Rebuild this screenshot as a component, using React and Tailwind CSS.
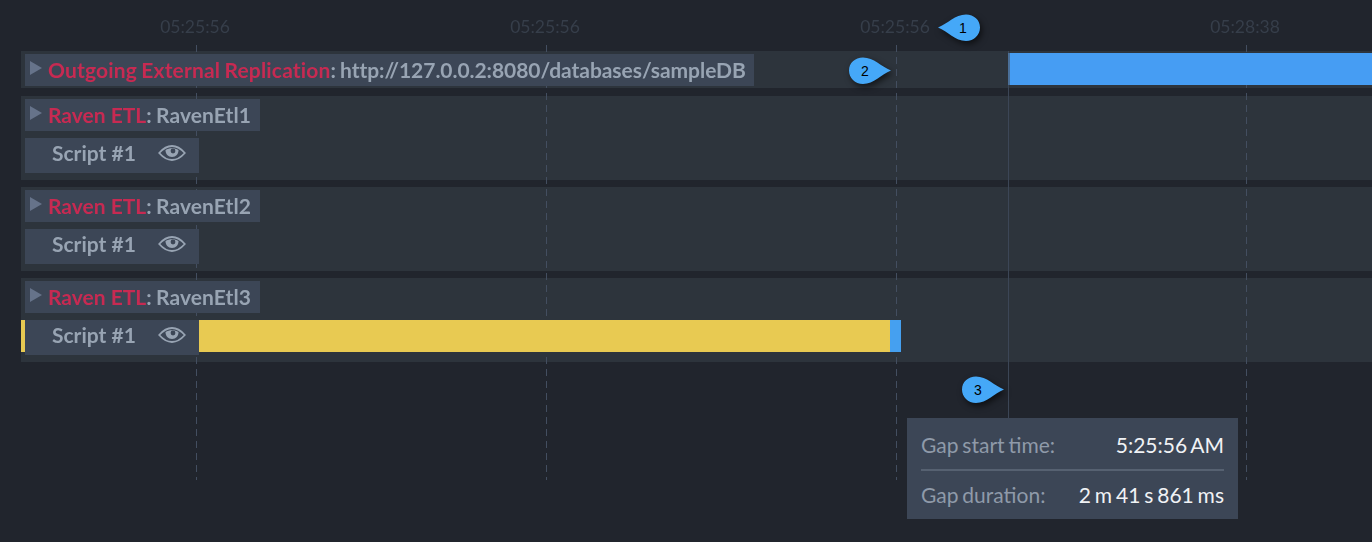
const lato = { fontFamily: "Lato, 'Liberation Sans', sans-serif" };

function Pin({ n, dir, className }) {
  const d =
    dir === "left"
      ? "M0 13.5 C10 9.5 17 0.5 28 0.5 C36 0.5 42 6 42 13.5 C42 21 36 27 28 27 C17 27 10 17.5 0 13.5 Z"
      : "M42 13.5 C32 9.5 25 0.5 14 0.5 C6 0.5 0 6 0 13.5 C0 21 6 27 14 27 C25 27 32 17.5 42 13.5 Z";
  return (
    <div className={`absolute z-20 w-[42px] h-7 ${className}`}>
      <svg width="42" height="28" viewBox="0 0 42 28" className="absolute inset-0 overflow-visible drop-shadow-[2px_3px_3px_rgba(0,0,0,0.6)]">
        <path d={d} fill="#45a8f8" />
      </svg>
      <span
        className={`absolute top-0 h-7 leading-7 text-[14px] text-black text-center w-6 ${dir === "left" ? "left-[13px]" : "left-[4px]"}`}
        style={{ fontFamily: "'Liberation Sans', sans-serif" }}
      >
        {n}
      </span>
    </div>
  );
}

function Eye() {
  return (
    <svg width="28" height="16" viewBox="0 0 28 16" fill="none" stroke="#98a4b3" className="shrink-0">
      <path d="M1.2 8 C6 2.5 10 1 14 1 C18 1 22 2.5 26.8 8 C22 13.5 18 15 14 15 C10 15 6 13.5 1.2 8 Z" strokeWidth="1.8" />
      <path d="M7.5 5 C11 2.5 17 2.5 20.5 5 C20.5 9 18 12 14 12 C10 12 7.5 9 7.5 5 Z" fill="#98a4b3" stroke="none" />
      <circle cx="15" cy="6" r="2.4" fill="#3c4656" stroke="none" />
    </svg>
  );
}

function Title({ kind, name, wide }) {
  return (
    <div className={`relative z-10 h-[32px] bg-[#3c4656] flex items-center w-fit text-[21px] font-bold pl-[5px] whitespace-nowrap blur-[0.5px] ${wide ? "pr-[8px] [word-spacing:-1px]" : "pr-[9px]"}`}>
      <span className="w-0 h-0 border-y-[7px] border-y-transparent border-l-[12px] border-l-[#66738a] mr-[6px] -mt-1 shrink-0" />
      <span className={`text-[#c72a52] ${wide ? "tracking-[0.17px]" : ""}`}>{kind}</span>
      <span className={`text-[#98a4b3] ${wide ? "tracking-[-0.05px]" : "tracking-[0.1px] [word-spacing:-1px]"}`}>: {name}</span>
    </div>
  );
}

function Script({ bar }) {
  return (
    <div className="flex items-start mt-[7px] relative z-10">
      {bar && <div className="absolute left-[-4px] top-0 w-1 h-[32px] bg-[#e8ca52]" />}
      <div className="h-[35px] w-[174px] bg-[#3c4656] flex items-center pl-[27px] pb-[5px] gap-[22px] text-[21px] font-bold text-[#98a4b3] shrink-0 blur-[0.5px]">
        <span>Script #1</span>
        <Eye />
      </div>
      {bar && (
        <>
          <div className="w-[691px] h-[32px] bg-[#e8ca52]" />
          <div className="w-[11px] h-[32px] bg-[#45a0f0]" />
        </>
      )}
    </div>
  );
}

function EtlRow({ name, bar }) {
  return (
    <div className="bg-[#2d343c] h-[84px] pt-[3px] pl-1">
      <Title kind="Raven ETL" name={name} />
      <Script bar={bar} />
    </div>
  );
}

const ticks = [
  { x: 196, t: "05:25:56" },
  { x: 546, t: "05:25:56" },
  { x: 896, t: "05:25:56" },
  { x: 1246, t: "05:28:38" },
];

export default function App() {
  return (
    <div className="relative w-[1372px] h-[542px] overflow-hidden bg-[#21252d]" style={lato}>
      {/* Axis labels */}
      {ticks.map((k) => (
        <span
          key={k.x}
          className="absolute top-[17px] w-[90px] text-center text-[17.5px] leading-5 text-[#363e4a] blur-[0.5px]"
          style={{ left: k.x - 46 }}
        >
          {k.t}
        </span>
      ))}

      {/* Tracks */}
      <div className="absolute left-[21px] right-0 top-[51px] flex flex-col">
        <div className="bg-[#2d343c] h-[37px] pt-[3px] pl-1 mb-2">
          <Title wide kind="Outgoing External Replication" name="http://127.0.0.2:8080/databases/sampleDB" />
        </div>
        <div className="flex flex-col gap-[7px]">
          <EtlRow name="RavenEtl1" />
          <EtlRow name="RavenEtl2" />
          <EtlRow name="RavenEtl3" bar />
        </div>
      </div>

      {/* Blue gap bar in the first track */}
      <div className="absolute z-10 left-[1008px] right-0 top-[53px] h-[32px] bg-[#469df3] border-l-2 border-[#4a6f98]" />

      {/* Dashed grid lines */}
      {ticks.map((k) => (
        <div
          key={k.x}
          className="absolute z-[5] top-[45px] h-[435px] w-px bg-[repeating-linear-gradient(to_bottom,#434e60_0,#434e60_7px,transparent_7px,transparent_12px)] pointer-events-none"
          style={{ left: k.x }}
        />
      ))}
      {/* Solid gap line */}
      <div className="absolute z-[5] left-[1008px] top-[51px] h-[367px] w-px bg-[#3c4656]" />

      {/* Pins */}
      <Pin n="1" dir="left" className="left-[938px] top-[14px]" />
      <Pin n="2" dir="right" className="left-[849px] top-[57px]" />
      <Pin n="3" dir="right" className="left-[962px] top-[376px]" />

      {/* Tooltip */}
      <div className="absolute z-20 left-[907px] top-[418px] w-[331px] h-[101px] bg-[#3c4656] px-[14px] text-[21px] [word-spacing:-1.5px]">
        <div className="h-[53px] flex items-center justify-between border-b-2 border-[#566171] pt-[3px]">
          <span className="text-[#8f9aa9]">Gap start time:</span>
          <span className="text-[#f0f2f5]">5:25:56 AM</span>
        </div>
        <div className="h-[48px] flex items-center justify-between">
          <span className="text-[#8f9aa9]">Gap duration:</span>
          <span className="text-[#f0f2f5]">2 m 41 s 861 ms</span>
        </div>
      </div>
    </div>
  );
}
